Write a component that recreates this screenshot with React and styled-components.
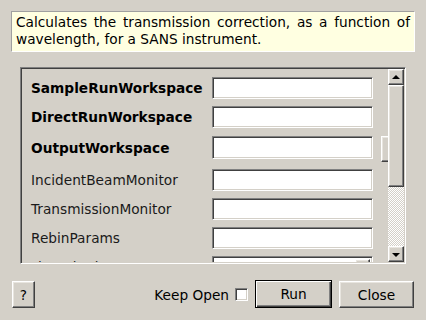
import React from "react";
import styled, { createGlobalStyle, css } from "styled-components";

const GlobalStyle = createGlobalStyle`
  html, body {
    margin: 0;
    padding: 0;
    background: #d4d0c8;
  }
  body {
    font-family: "DejaVu Sans", "Liberation Sans", sans-serif;
    font-size: 13.7px;
    color: #000;
  }
`;

const raised = css`
  border: 1px solid;
  border-color: #fff #404040 #404040 #fff;
  box-shadow: inset -1px -1px #808080, inset 1px 1px #e8e5df;
  background: #d4d0c8;
`;

const sunken = css`
  border: 1px solid;
  border-color: #808080 #fff #fff #808080;
  box-shadow: inset 1px 1px #404040, inset -1px -1px #d4d0c8;
`;

const Dialog = styled.div`
  width: 426px;
  height: 320px;
  box-sizing: border-box;
  padding-top: 11px;
  display: flex;
  flex-direction: column;
`;

const Description = styled.div`
  margin: 0 11px;
  height: 41px;
  box-sizing: border-box;
  padding: 2px 4px 0 4px;
  background: #ffffe1;
  border: 1px solid;
  border-color: #a0a0a0 #fff #fff #a0a0a0;
  line-height: 17px;
  text-align: justify;
`;

const Frame = styled.div`
  margin: 15px 20px 0 20px;
  height: 197px;
  box-sizing: border-box;
  display: flex;
  ${sunken};
  padding: 1px;
`;

const Content = styled.div`
  flex: 1;
  overflow: hidden;
  padding: 8px 0 0 9px;
  display: flex;
  flex-direction: column;
`;

const Row = styled.div`
  display: flex;
  align-items: center;
  flex-shrink: 0;
  height: ${(p) => p.$h || 22}px;
  margin-top: ${(p) => p.$top || 0}px;
`;

const Label = styled.div`
  width: 181px;
  flex-shrink: 0;
  font-weight: ${(p) => (p.$bold ? 700 : 400)};
  color: ${(p) => (p.$bold ? "#000" : "#1a1a1a")};
  white-space: nowrap;
`;

const Input = styled.div`
  width: 161px;
  height: 100%;
  flex-shrink: 0;
  box-sizing: border-box;
  background: #fff;
  ${sunken};
  position: relative;
`;

const ComboArrow = styled.div`
  position: absolute;
  top: 2px;
  right: 2px;
  width: 15px;
  height: 18px;
  box-sizing: border-box;
  ${raised};
`;

const SideButton = styled.div`
  width: 30px;
  height: 26px;
  flex-shrink: 0;
  align-self: flex-start;
  margin-left: 8px;
  box-sizing: border-box;
  ${raised};
`;

const ScrollBar = styled.div`
  width: 16px;
  flex-shrink: 0;
  display: flex;
  flex-direction: column;
`;

const ScrollButton = styled.div`
  height: 16px;
  box-sizing: border-box;
  ${raised};
  display: flex;
  align-items: center;
  justify-content: center;
`;

const Arrow = styled.div`
  width: 0;
  height: 0;
  border-left: 4px solid transparent;
  border-right: 4px solid transparent;
  ${(p) =>
    p.$down
      ? "border-top: 4px solid #000; margin-top: 1px;"
      : "border-bottom: 4px solid #000; margin-bottom: 1px;"}
`;

const Thumb = styled.div`
  height: 102px;
  box-sizing: border-box;
  ${raised};
`;

const Trough = styled.div`
  flex: 1;
  background-color: #d4d0c8;
  background-image: repeating-conic-gradient(#fff 0 25%, #d4d0c8 0 50%);
  background-size: 2px 2px;
`;

const Bottom = styled.div`
  display: flex;
  align-items: flex-end;
  height: 28px;
  margin-top: 16px;
  padding: 0 12px;
`;

const Button = styled.button`
  font: inherit;
  color: #000;
  padding: 0;
  box-sizing: border-box;
  width: ${(p) => p.$w}px;
  height: ${(p) => p.$h || 27}px;
  ${(p) =>
    p.$default
      ? css`
          background: #d4d0c8;
          border: 1px solid #000;
          box-shadow: inset 1px 1px #fff, inset -1px -1px #404040,
            inset -2px -2px #808080;
        `
      : raised}
`;

const Spacer = styled.div`
  flex: 1;
`;

const KeepOpen = styled.label`
  display: flex;
  align-items: center;
  height: 27px;
  margin-right: 7px;
`;

const Check = styled.span`
  display: inline-block;
  width: 13px;
  height: 13px;
  box-sizing: border-box;
  margin-left: 6px;
  background: #fff;
  ${sunken};
`;

const Gap = styled.div`
  width: 7px;
`;

const rows = [
  { name: "SampleRunWorkspace", bold: true, top: 0 },
  { name: "DirectRunWorkspace", bold: true, top: 7 },
  { name: "OutputWorkspace", bold: true, top: 8, h: 23, side: true },
  { name: "IncidentBeamMonitor", top: 10 },
  { name: "TransmissionMonitor", top: 7 },
  { name: "RebinParams", top: 7 },
  { name: "FitMethod", top: 7, combo: true },
];

export default function App() {
  return (
    <Dialog>
      <GlobalStyle />
      <Description>
        Calculates the transmission correction, as a function of wavelength,
        for a SANS instrument.
      </Description>
      <Frame>
        <Content>
          {rows.map((r) => (
            <Row key={r.name} $top={r.top} $h={r.h}>
              <Label $bold={r.bold}>{r.name}</Label>
              <Input>{r.combo && <ComboArrow />}</Input>
              {r.side && <SideButton />}
            </Row>
          ))}
        </Content>
        <ScrollBar>
          <ScrollButton>
            <Arrow />
          </ScrollButton>
          <Thumb />
          <Trough />
          <ScrollButton>
            <Arrow $down />
          </ScrollButton>
        </ScrollBar>
      </Frame>
      <Bottom>
        <Button $w={23}>?</Button>
        <Spacer />
        <KeepOpen>
          Keep Open
          <Check />
        </KeepOpen>
        <Button $w={77} $h={28} $default>
          Run
        </Button>
        <Gap />
        <Button $w={75}>Close</Button>
      </Bottom>
    </Dialog>
  );
}
